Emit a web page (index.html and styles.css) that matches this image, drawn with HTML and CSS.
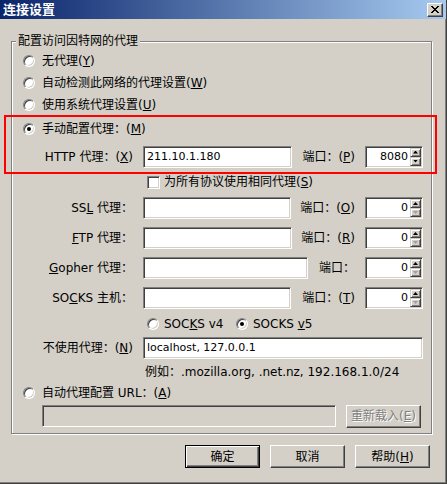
FILE: index.html
```html
<!DOCTYPE html>
<html>
<head>
<meta charset="utf-8">
<link rel="stylesheet" href="styles.css">
</head>
<body>

<div class="window">

  <div class="titlebar">
    <span class="title">连接设置</span>
    <span class="close-btn">
      <svg width="8" height="7" viewBox="0 0 8 7"><path d="M0 0h2v1H0z M6 0h2v1H6z M1 1h2v1H1z M5 1h2v1H5z M2 2h4v1H2z M3 3h2v1H3z M2 4h4v1H2z M1 5h2v1H1z M5 5h2v1H5z M0 6h2v1H0z M6 6h2v1H6z" fill="#000"/></svg>
    </span>
  </div>

  <div class="content">
    <div class="group">
      <div class="group-title">配置访问因特网的代理</div>
      <div class="rows">
        <div class="row h22"><span class="radio"></span><span>无代理(<u>Y</u>)</span></div>
        <div class="row h22"><span class="radio"></span><span>自动检测此网络的代理设置(<u>W</u>)</span></div>
        <div class="row h22"><span class="radio"></span><span>使用系统代理设置(<u>U</u>)</span></div>
        <div class="row h26"><span class="radio on"></span><span>手动配置代理：(<u>M</u>)</span></div>

        <div class="row h29">
          <span class="lbl">HTTP 代理：(<u>X</u>)</span>
          <span class="field w149">211.10.1.180</span>
          <span class="port">端口：(<u>P</u>)</span>
          <span class="spin"><span class="spin-val">8080</span><span class="spin-btns"><span class="sb"><i class="arr up"></i></span><span class="sb"><i class="arr down"></i></span></span></span>
        </div>

        <div class="row h22"><span class="check"></span><span>为所有协议使用相同代理(<u>S</u>)</span></div>

        <div class="row h30">
          <span class="lbl">SS<u>L</u> 代理：</span>
          <span class="field w148"></span>
          <span class="port">端口：(<u>O</u>)</span>
          <span class="spin"><span class="spin-val">0</span><span class="spin-btns"><span class="sb"><i class="arr up"></i></span><span class="sb"><i class="arr down off"></i></span></span></span>
        </div>
        <div class="row h30">
          <span class="lbl"><u>F</u>TP 代理：</span>
          <span class="field w149"></span>
          <span class="port">端口：(<u>R</u>)</span>
          <span class="spin"><span class="spin-val">0</span><span class="spin-btns"><span class="sb"><i class="arr up"></i></span><span class="sb"><i class="arr down off"></i></span></span></span>
        </div>
        <div class="row h30">
          <span class="lbl"><u>G</u>opher 代理：</span>
          <span class="field w165"></span>
          <span class="port">端口：</span>
          <span class="spin"><span class="spin-val">0</span><span class="spin-btns"><span class="sb"><i class="arr up"></i></span><span class="sb"><i class="arr down off"></i></span></span></span>
        </div>
        <div class="row h30">
          <span class="lbl">SO<u>C</u>KS 主机：</span>
          <span class="field w148"></span>
          <span class="port">端口：(<u>T</u>)</span>
          <span class="spin"><span class="spin-val">0</span><span class="spin-btns"><span class="sb"><i class="arr up"></i></span><span class="sb"><i class="arr down off"></i></span></span></span>
        </div>

        <div class="row h22 socks-ver">
          <span class="opt v4"><span class="radio"></span><span>SOC<u>K</u>S v4</span></span>
          <span class="opt"><span class="radio on"></span><span>SOCKS <u>v</u>5</span></span>
        </div>

        <div class="row h26">
          <span class="lbl">不使用代理：(<u>N</u>)</span>
          <span class="field grow">localhost, 127.0.0.1</span>
        </div>

        <div class="row h22 hint"><span>例如：.mozilla.org, .net.nz, 192.168.1.0/24</span></div>

        <div class="row h20"><span class="radio"></span><span>自动代理配置 URL：(<u>A</u>)</span></div>

        <div class="row h26 url-row">
          <span class="field off w294"></span>
          <span class="btn off w77">重新载入(<u>E</u>)</span>
        </div>
      </div>
    </div>

    <div class="buttons">
      <span class="btn default">确定</span>
      <span class="btn">取消</span>
      <span class="btn">帮助(<u>H</u>)</span>
    </div>
  </div>

  <div class="highlight"></div>

</div>

</body>
</html>
```

FILE: styles.css
```css
body {
  margin: 0;
  background: #d4d0c8;
  font-family: "DejaVu Sans", "Noto Sans CJK SC", sans-serif;
  font-size: 12px;
  line-height: 14px;
  color: #000;
}

.window {
  position: relative;
  width: 447px;
  height: 484px;
  box-sizing: border-box;
  background: #d4d0c8;
  border-right: 1px solid #404040;
  border-bottom: 1px solid #404040;
  box-shadow: inset -1px -1px #808080;
}

.titlebar {
  height: 19px;
  display: flex;
  align-items: center;
  justify-content: space-between;
  padding: 0 3px;
  background: linear-gradient(to right, #0a246a, #a6caf0);
}

.title {
  color: #fff;
  font-weight: bold;
  font-size: 13px;
}

.close-btn {
  width: 16px;
  height: 14px;
  box-sizing: border-box;
  display: flex;
  align-items: center;
  justify-content: center;
  background: #d4d0c8;
  border: 1px solid;
  border-color: #fff #404040 #404040 #fff;
  box-shadow: inset -1px -1px #808080;
}

.content {
  padding: 22px 0 0 11px;
}

/* group box */
.group {
  width: 421px;
  box-sizing: border-box;
  border: 1px solid #808080;
  box-shadow: inset 1px 1px #fff, 1px 1px #fff;
  padding-bottom: 4px;
}

.group-title {
  width: fit-content;
  height: 14px;
  margin: -8px 0 0 4px;
  padding: 0 2px;
  background: #d4d0c8;
}

.rows {
  padding-top: 2px;
}

.row {
  display: flex;
  align-items: center;
  padding: 0 8px 0 11px;
  white-space: nowrap;
}

.h20 { height: 20px; }
.h22 { height: 22px; }
.h26 { height: 26px; }
.h29 { height: 29px; }
.h30 { height: 30px; }

/* controls */
.radio {
  flex: none;
  width: 12px;
  height: 12px;
  box-sizing: border-box;
  border-radius: 50%;
  background: #fff;
  border: 1px solid;
  border-color: #808080 #fff #fff #808080;
  box-shadow: inset 1px 1px #404040, inset -1px -1px #d4d0c8;
  margin-right: 7px;
  display: flex;
  align-items: center;
  justify-content: center;
}

.radio.on::after {
  content: "";
  width: 4px;
  height: 4px;
  border-radius: 50%;
  background: #000;
}

.check {
  flex: none;
  width: 13px;
  height: 13px;
  box-sizing: border-box;
  background: #fff;
  border: 1px solid;
  border-color: #808080 #fff #fff #808080;
  box-shadow: inset 1px 1px #404040, inset -1px -1px #d4d0c8;
  margin: 0 4px 0 124px;
}

.lbl {
  flex: none;
  width: 110px;
  margin-right: 10px;
  text-align: right;
}

.field {
  flex: none;
  height: 22px;
  box-sizing: border-box;
  display: flex;
  align-items: center;
  padding: 0 3px;
  background: #fff;
  font-size: 11px;
  border: 1px solid;
  border-color: #808080 #fff #fff #808080;
  box-shadow: inset 1px 1px #404040, inset -1px -1px #d4d0c8;
}

.field.off { background: #d4d0c8; }
.field.grow { flex: 1; }

.w148 { width: 148px; }
.w149 { width: 149px; }
.w165 { width: 165px; }
.w294 { width: 294px; }
.w77 { width: 77px; }

.port {
  margin-left: auto;
  margin-right: 10px;
}

.spin {
  flex: none;
  width: 58px;
  height: 22px;
  box-sizing: border-box;
  display: flex;
  padding: 1px;
  background: #fff;
  border: 1px solid;
  border-color: #808080 #fff #fff #808080;
  box-shadow: inset 1px 1px #404040, inset -1px -1px #d4d0c8;
}

.spin-val {
  flex: 1;
  text-align: right;
  padding-right: 2px;
  font-size: 11px;
  line-height: 18px;
}

.spin-btns {
  width: 11px;
  display: flex;
  flex-direction: column;
}

.sb {
  flex: 1;
  box-sizing: border-box;
  display: flex;
  align-items: center;
  justify-content: center;
  background: #d4d0c8;
  border: 1px solid;
  border-color: #d4d0c8 #404040 #404040 #d4d0c8;
  box-shadow: inset 1px 1px #fff, inset -1px -1px #808080;
}

.arr {
  width: 5px;
  height: 3px;
  background: #000;
}

.arr.up { clip-path: polygon(50% 0, 100% 100%, 0 100%); }
.arr.down { clip-path: polygon(0 0, 100% 0, 50% 100%); }
.arr.off { background: #a0a0a0; }

.socks-ver {
  padding-left: 135px;
}

.opt {
  display: flex;
  align-items: center;
}

.opt .radio { margin-right: 5px; }
.opt.v4 { width: 89px; }

.hint {
  padding-left: 133px;
}

.url-row {
  padding-left: 30px;
  gap: 10px;
}

/* push buttons */
.btn {
  flex: none;
  width: 75px;
  height: 23px;
  box-sizing: border-box;
  display: flex;
  align-items: center;
  justify-content: center;
  background: #d4d0c8;
  border: 1px solid;
  border-color: #fff #404040 #404040 #fff;
  box-shadow: inset -1px -1px #808080;
}

.btn.default {
  border-color: #000;
  box-shadow: inset 1px 1px #fff, inset -1px -1px #404040, inset -2px -2px #808080;
}

.btn.off {
  color: #808080;
  text-shadow: 1px 1px #fff;
}

.buttons {
  display: flex;
  justify-content: flex-end;
  gap: 10px;
  margin-top: 11px;
  padding-right: 16px;
}

/* red annotation frame */
.highlight {
  position: absolute;
  left: 4px;
  top: 115px;
  width: 433px;
  height: 59px;
  box-sizing: border-box;
  border: 2px solid #f00;
}
```
